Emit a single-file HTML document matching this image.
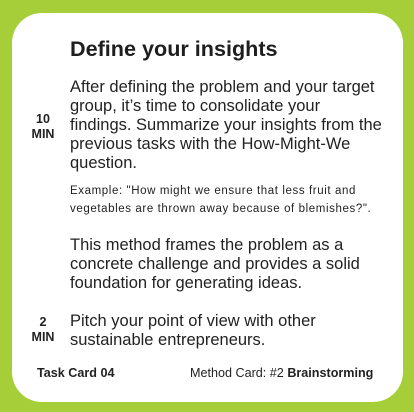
<!DOCTYPE html>
<html><head><style>
html,body{margin:0;padding:0;}
body{width:414px;height:412px;background:#a6ce39;position:relative;overflow:hidden;font-family:"Liberation Sans",sans-serif;color:#222;}
.card{position:absolute;left:12px;top:13px;width:391px;height:389px;background:#fff;border-radius:30px;}
.t{position:absolute;white-space:nowrap;}
.title{left:70px;top:36px;font-size:21.6px;font-weight:bold;color:#1e1e1e;}
.body{left:70px;font-size:16.5px;line-height:19px;color:#222;}
.small{left:70px;font-size:11.5px;line-height:18px;letter-spacing:0.6px;}
.min{width:30px;text-align:center;font-size:12.5px;font-weight:bold;line-height:15px;left:28px;}
.foot{font-size:12.6px;top:366px;}
</style></head><body>
<div class="card"></div>
<div class="t title">Define your insights</div>
<div class="t body" style="top:78px">After defining the problem and your target<br>group, it’s time to consolidate your<br>findings. Summarize your insights from the<br>previous tasks with the How-Might-We<br>question.</div>
<div class="t min" style="top:112px">10<br>MIN</div>
<div class="t small" style="top:182px">Example: "How might we ensure that less fruit and<br>vegetables are thrown away because of blemishes?".</div>
<div class="t body" style="top:236px">This method frames the problem as a<br>concrete challenge and provides a solid<br>foundation for generating ideas.</div>
<div class="t min" style="top:315px">2<br>MIN</div>
<div class="t body" style="top:312px">Pitch your point of view with other<br>sustainable entrepreneurs.</div>
<div class="t foot" style="left:37px;font-weight:bold">Task Card 04</div>
<div class="t foot" style="left:190px">Method Card: #2 <b>Brainstorming</b></div>
</body></html>
